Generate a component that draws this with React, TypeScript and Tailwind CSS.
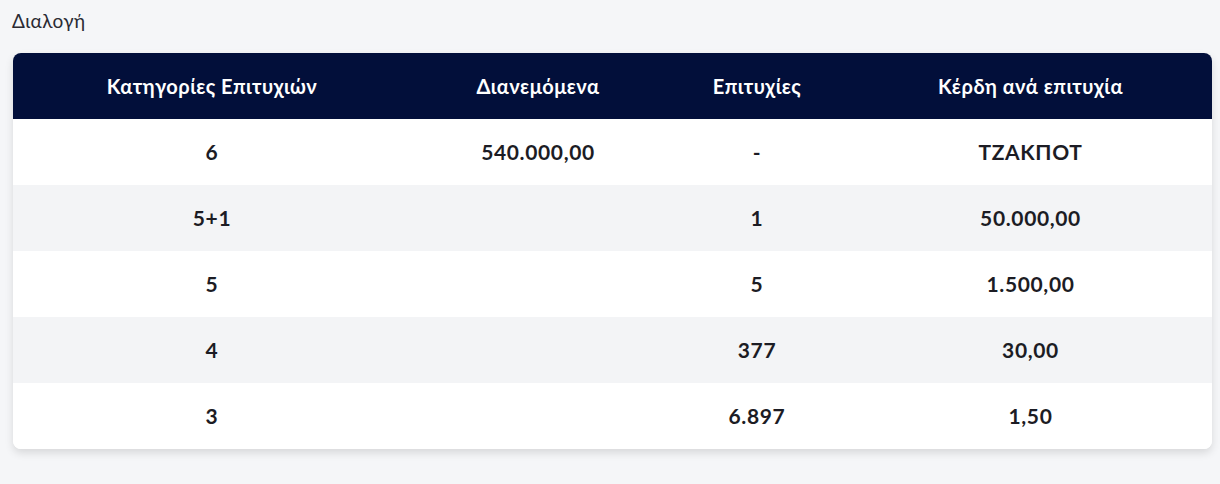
const rows = [
  { cat: '6', pool: '540.000,00', wins: '-', prize: 'ΤΖΑΚΠΟΤ' },
  { cat: '5+1', pool: '', wins: '1', prize: '50.000,00' },
  { cat: '5', pool: '', wins: '5', prize: '1.500,00' },
  { cat: '4', pool: '', wins: '377', prize: '30,00' },
  { cat: '3', pool: '', wins: '6.897', prize: '1,50' },
];

const App = () => {
  return (
    <div className="min-h-[484px] bg-[#f5f6f8] pl-[13px] pr-2 pt-[7px] font-['Lato','Open_Sans',sans-serif] text-[#1c1c24]">
      <h1 className="-ml-px text-[19px] leading-[28px] font-normal tracking-[0.02em] text-[#2a2a33]">Διαλογή</h1>
      <div className="mt-[18px] overflow-hidden rounded-lg bg-white shadow-[0_4px_8px_rgba(0,0,0,0.12)]">
        <table className="w-full table-fixed border-collapse text-center">
          <colgroup>
            <col className="w-[398px]" />
            <col className="w-[254px]" />
            <col className="w-[184px]" />
            <col />
          </colgroup>
          <thead>
            <tr className="h-[66px] bg-[#020f3a] text-[20px] font-bold tracking-[0.025em] text-white">
              <th>Κατηγορίες Επιτυχιών</th>
              <th>Διανεμόμενα</th>
              <th>Επιτυχίες</th>
              <th>Κέρδη ανά επιτυχία</th>
            </tr>
          </thead>
          <tbody>
            {rows.map((r, i) => (
              <tr
                key={r.cat}
                className={`h-[66px] text-[21px] font-bold tracking-[0.03em] ${i % 2 === 1 ? 'bg-[#f3f4f6]' : 'bg-white'}`}
              >
                <td>{r.cat}</td>
                <td>{r.pool}</td>
                <td>{r.wins}</td>
                <td>{r.prize}</td>
              </tr>
            ))}
          </tbody>
        </table>
      </div>
    </div>
  );
};

export default App;
